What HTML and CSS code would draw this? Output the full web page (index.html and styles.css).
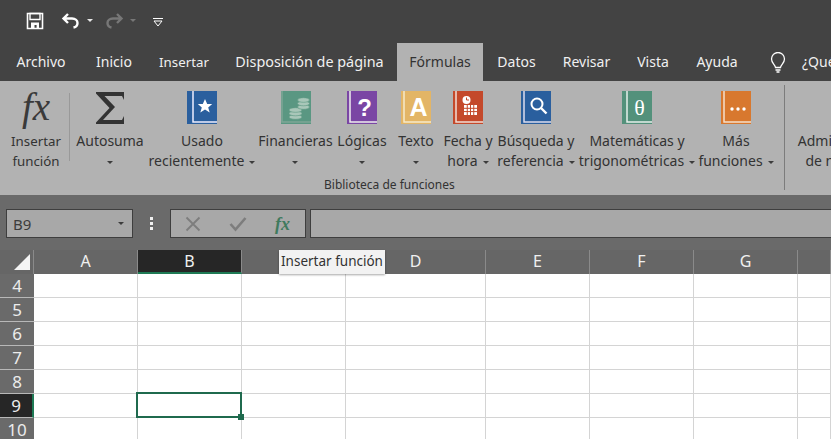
FILE: index.html
```html
<!DOCTYPE html>
<html lang="es">
<head>
<meta charset="utf-8">
<title>Fórmulas</title>
<link rel="stylesheet" href="styles.css">
</head>
<body>
<div class="app">
  <header class="qat">
    <svg class="qat-save" width="18" height="18" viewBox="0 0 18 18"><path d="M1.500 1.500h15v15h-15z" fill="none" stroke="#fff" stroke-width="1.600"/><path d="M4 1.500h10v6H4z" fill="none" stroke="#fff" stroke-width="1.400"/><path d="M5 16v-5.500h8V16h-2.400v-3H8.500v3z" fill="#fff"/></svg>
    <svg class="qat-undo" width="20" height="18" viewBox="0 0 20 18"><path d="M7 2 2.500 6.500 7 11M3 6.500h8c3.500 0 5.500 2 5.500 4.500s-1.500 4-4 4.500" fill="none" stroke="#fff" stroke-width="2.400"/></svg>
    <span class="caret caret-light"></span>
    <svg class="qat-redo" width="20" height="18" viewBox="0 0 20 18"><path d="M13 2l4.500 4.500L13 11M17 6.500H9c-3.500 0-5.500 2-5.500 4.500s1.500 4 4 4.500" fill="none" stroke="#777" stroke-width="2.400"/></svg>
    <span class="caret caret-dim"></span>
    <svg class="qat-more" width="10" height="9" viewBox="0 0 10 9"><path d="M0 .5h10" stroke="#fff"/><path d="M1 3h8L5 8z" fill="none" stroke="#fff"/></svg>
  </header>

  <nav class="tabs">
    <span class="tab t-archivo">Archivo</span>
    <span class="tab t-inicio">Inicio</span>
    <span class="tab t-insertar">Insertar</span>
    <span class="tab t-disp">Disposición de página</span>
    <span class="tab t-form tab-active">Fórmulas</span>
    <span class="tab t-datos">Datos</span>
    <span class="tab t-rev">Revisar</span>
    <span class="tab t-vista">Vista</span>
    <span class="tab t-ayuda">Ayuda</span>
    <svg class="bulb" width="16" height="21" viewBox="0 0 16 21"><path d="M5.500 15.500C5 12.500 1.500 11 1.500 7a6.500 6.500 0 0 1 13 0c0 4-3.500 5.500-4 8.500z" fill="none" stroke="#fff" stroke-width="1.300"/><path d="M5.500 18h5M6.500 20h3" stroke="#fff" stroke-width="1.300"/></svg>
    <span class="search">¿Qué desea hacer?</span>
  </nav>

  <section class="ribbon">
    <div class="rb w-insert">
      <span class="fx-big">fx</span>
      <span class="rb-label rb-narrow">Insertar<br>función</span>
    </div>
    <div class="rb-sep-small"></div>
    <div class="rb w-auto">
      <svg class="rb-icon" width="30" height="34" viewBox="0 0 30 34"><path d="M1 1h28v8l-2-4H9.500L20 16 8 29h19l2-4v8H1v-1.500L14.500 17 1 2.500z" fill="#333"/></svg>
      <span class="rb-label">Autosuma<br><span class="caret caret-dark"></span></span>
    </div>
    <div class="rb w-used">
      <svg class="rb-icon" width="30" height="34" viewBox="0 0 30 34"><rect width="30" height="33" fill="#2a5f9e"/><path d="M6 0v31h24" fill="none" stroke="#eef" stroke-width="1.500"/><path d="M18 8l2.200 5h5l-4 3.400 1.500 5.200-4.700-3-4.700 3 1.500-5.200-4-3.400h5z" fill="#fff"/></svg>
      <span class="rb-label">Usado<br>recientemente<span class="caret caret-dark inline"></span></span>
    </div>
    <div class="rb w-fin">
      <svg class="rb-icon" width="30" height="34" viewBox="0 0 30 34"><rect width="30" height="33" fill="#5a9782"/><path d="M1 0v31h29" fill="none" stroke="#7fa796" stroke-width="1.500"/><g fill="#a9c7b9" stroke="#5a9782" stroke-width=".6"><ellipse cx="14.500" cy="26" rx="6.500" ry="2.300"/><ellipse cx="14.500" cy="22.500" rx="6.500" ry="2.300"/><ellipse cx="14.500" cy="19" rx="6.500" ry="2.300"/><ellipse cx="22.500" cy="16" rx="6" ry="2.300"/><ellipse cx="22.500" cy="12.500" rx="6" ry="2.300"/><ellipse cx="22.500" cy="9" rx="6" ry="2.300"/></g></svg>
      <span class="rb-label">Financieras<br><span class="caret caret-dark"></span></span>
    </div>
    <div class="rb w-log">
      <svg class="rb-icon" width="30" height="34" viewBox="0 0 30 34"><rect width="30" height="33" fill="#7a46a4"/><path d="M3 0v31h27" fill="none" stroke="#eee" stroke-width="1.500"/><text class="glyph glyph-q" x="17.500" y="25">?</text></svg>
      <span class="rb-label">Lógicas<br><span class="caret caret-dark"></span></span>
    </div>
    <div class="rb w-txt">
      <svg class="rb-icon" width="30" height="34" viewBox="0 0 30 34"><rect width="30" height="33" fill="#e3b566"/><path d="M3 0v31h27" fill="none" stroke="#f6eacb" stroke-width="1.500"/><text class="glyph glyph-a" x="17.500" y="25">A</text></svg>
      <span class="rb-label">Texto<br><span class="caret caret-dark"></span></span>
    </div>
    <div class="rb w-date">
      <svg class="rb-icon" width="30" height="34" viewBox="0 0 30 34"><rect width="30" height="33" fill="#c4492b"/><path d="M3 0v31h27" fill="none" stroke="#f2ddd5" stroke-width="1.500"/><circle cx="13.500" cy="9" r="4" fill="#fff"/><path d="M13.500 6.500V9h2.500" stroke="#c4492b" fill="none"/><path d="M11 14h13v10H11z" fill="#fff"/><path d="M14.250 14v10M17.500 14v10M20.750 14v10M11 17.300h13M11 20.600h13" stroke="#c4492b"/></svg>
      <span class="rb-label">Fecha y<br>hora<span class="caret caret-dark inline"></span></span>
    </div>
    <div class="rb w-find">
      <svg class="rb-icon" width="30" height="34" viewBox="0 0 30 34"><rect width="30" height="33" fill="#2a5f9e"/><path d="M3 0v31h27" fill="none" stroke="#dde" stroke-width="1.500"/><circle cx="16" cy="13" r="5.500" fill="none" stroke="#fff" stroke-width="2"/><path d="M20 17l5.500 5.500" stroke="#fff" stroke-width="2.400"/></svg>
      <span class="rb-label">Búsqueda y<br>referencia<span class="caret caret-dark inline"></span></span>
    </div>
    <div class="rb w-math">
      <svg class="rb-icon" width="30" height="34" viewBox="0 0 30 34"><rect width="30" height="33" fill="#53917b"/><path d="M5 0v31h25" fill="none" stroke="#e6f0ec" stroke-width="1.500"/><text class="glyph glyph-t" x="17.500" y="24">θ</text></svg>
      <span class="rb-label">Matemáticas y<br>trigonométricas<span class="caret caret-dark inline"></span></span>
    </div>
    <div class="rb w-more">
      <svg class="rb-icon" width="30" height="34" viewBox="0 0 30 34"><rect width="30" height="33" fill="#d8782e"/><path d="M3 0v31h27" fill="none" stroke="#f5e0cc" stroke-width="1.500"/><g fill="#fff"><circle cx="11" cy="18" r="1.700"/><circle cx="17" cy="18" r="1.700"/><circle cx="23" cy="18" r="1.700"/></g></svg>
      <span class="rb-label">Más<br>funciones<span class="caret caret-dark inline"></span></span>
    </div>
    <div class="rb-sep"></div>
    <div class="rb w-admin">
      <span class="admin-icon"></span>
      <span class="rb-label">Administrador<br>de nombres</span>
    </div>
    <div class="group-label">Biblioteca de funciones</div>
  </section>

  <section class="fbar">
    <div class="namebox"><span>B9</span><span class="caret caret-dark"></span></div>
    <div class="kebab"><i></i><i></i><i></i></div>
    <div class="fbtns">
      <svg width="16" height="16" viewBox="0 0 16 16"><path d="M1.500 1.500l13 13M14.500 1.500l-13 13" stroke="#7d7d7d" stroke-width="1.800"/></svg>
      <svg width="18" height="16" viewBox="0 0 18 16"><path d="M1.500 8l5 5.500L16.500 2" fill="none" stroke="#7d7d7d" stroke-width="2.600"/></svg>
      <span class="fx-small">fx</span>
    </div>
    <div class="finput"></div>
  </section>

  <section class="sheet">
    <div class="corner"><span class="tri"></span></div>
    <div class="ch">A</div><div class="ch ch-sel">B</div><div class="ch"></div><div class="ch">D</div><div class="ch">E</div><div class="ch">F</div><div class="ch">G</div><div class="ch"></div>

    <div class="rh">4</div><div class="c"></div><div class="c"></div><div class="c"></div><div class="c"></div><div class="c"></div><div class="c"></div><div class="c"></div><div class="c"></div>
    <div class="rh">5</div><div class="c"></div><div class="c"></div><div class="c"></div><div class="c"></div><div class="c"></div><div class="c"></div><div class="c"></div><div class="c"></div>
    <div class="rh">6</div><div class="c"></div><div class="c"></div><div class="c"></div><div class="c"></div><div class="c"></div><div class="c"></div><div class="c"></div><div class="c"></div>
    <div class="rh">7</div><div class="c"></div><div class="c"></div><div class="c"></div><div class="c"></div><div class="c"></div><div class="c"></div><div class="c"></div><div class="c"></div>
    <div class="rh">8</div><div class="c"></div><div class="c"></div><div class="c"></div><div class="c"></div><div class="c"></div><div class="c"></div><div class="c"></div><div class="c"></div>
    <div class="rh rh-sel">9</div><div class="c"></div><div class="c c-active"><span class="selbox"></span><span class="handle"></span></div><div class="c"></div><div class="c"></div><div class="c"></div><div class="c"></div><div class="c"></div><div class="c"></div>
    <div class="rh">10</div><div class="c"></div><div class="c"></div><div class="c"></div><div class="c"></div><div class="c"></div><div class="c"></div><div class="c"></div><div class="c"></div>

    <div class="tooltip">Insertar función</div>
  </section>
</div>
</body>
</html>
```
FILE: styles.css
```css
* { box-sizing: border-box; }
html, body { margin: 0; padding: 0; }
body { width: 831px; height: 439px; overflow: hidden; background: #fff; font-family: "Noto Sans", "Open Sans", sans-serif; }
.app { width: 831px; height: 439px; overflow: hidden; display: flex; flex-direction: column; }

.qat { height: 43px; background: #434343; display: flex; align-items: center; padding: 0 0 2px 26px; flex: none; }
.qat-save { margin-right: 17px; }
.qat-undo { margin-right: 6px; }
.qat-redo { margin-left: 11px; margin-right: 6px; }
.qat-more { margin-left: 17px; margin-top: 4px; }
.caret { display: inline-block; width: 0; height: 0; border-left: 3.500px solid transparent; border-right: 3.500px solid transparent; border-top: 3.500px solid #fff; }
.caret-light { border-top-color: #e8e8e8; }
.caret-dim { border-top-color: #777; }
.caret-dark { border-top-color: #3c3c3c; vertical-align: middle; }
.caret.inline { margin-left: 5px; }

.tabs { height: 38px; background: #434343; display: flex; align-items: stretch; flex: none; white-space: nowrap; overflow: hidden; }
.tab { color: #f0f0f0; font-size: 14px; line-height: 38px; text-align: center; flex: none; }
.t-archivo { width: 82px; }
.t-inicio { width: 64px; }
.t-insertar { width: 76px; font-size: 13.300px; }
.t-disp { width: 175px; font-size: 14.400px; }
.t-form { width: 86px; }
.t-datos { width: 67px; }
.t-rev { width: 73px; }
.t-vista { width: 60px; }
.t-ayuda { width: 68px; }
.tab-active { background: #b2b2b2; color: #333; }
.bulb { margin: 9px 16px 0 19px; flex: none; }
.search { color: #f0f0f0; font-size: 14px; line-height: 38px; }

.ribbon { height: 114px; background: #b2b2b2; display: flex; padding-left: 3px; flex: none; position: relative; overflow: hidden; }
.rb { flex: none; display: flex; flex-direction: column; align-items: center; padding-top: 10px; height: 100%; }
.rb-icon { display: block; height: 34px; flex: none; }
.rb-label { margin-top: 6px; text-align: center; color: #333; font-size: 14px; line-height: 20px; white-space: nowrap; }
.rb-narrow { font-size: 13.300px; }
.w-insert { width: 66px; }
.w-auto { width: 74px; }
.w-used { width: 110px; }
.w-fin { width: 77px; }
.w-log { width: 56px; }
.w-txt { width: 52px; }
.w-date { width: 52px; }
.w-find { width: 84px; }
.w-math { width: 118px; }
.w-more { width: 80px; }
.w-admin { width: 100px; margin-left: -2px; }
.rb-sep-small { width: 1px; height: 68px; background: #999; margin: 12px 3px 0 0; flex: none; }
.rb-sep { width: 1px; height: 105px; background: #7c7c7c; margin: 4px 12px 0 8px; flex: none; }
.fx-big { display: block; height: 34px; font-family: "Liberation Serif", serif; font-style: italic; font-size: 39px; line-height: 32px; color: #3a3a3a; }
.admin-icon { display: block; width: 12px; height: 13px; border: 1px solid #333; margin: 16px 0 5px 64px; flex: none; }
.group-label { position: absolute; left: 324px; top: 96px; font-size: 12px; line-height: 16px; color: #333; }
.glyph { text-anchor: middle; fill: #fff; font-family: "Liberation Sans", sans-serif; font-weight: bold; }
.glyph-q { font-size: 24px; }
.glyph-a { font-size: 25px; }
.glyph-t { font-size: 22px; font-family: "Liberation Serif", serif; font-weight: normal; }

.fbar { height: 55px; background: #6a6a6a; display: flex; align-items: flex-start; padding: 14px 0 0 6px; flex: none; }
.namebox { width: 127px; height: 29px; background: #a8a8a8; border: 1px solid #3e3e3e; display: flex; align-items: center; justify-content: space-between; padding: 0 8px 0 6px; color: #3c3c3c; font-size: 15px; }
.kebab { width: 37px; height: 29px; display: flex; flex-direction: column; align-items: center; justify-content: center; gap: 2px; }
.kebab i { width: 3px; height: 3px; background: #f0f0f0; display: block; }
.fbtns { width: 136px; height: 29px; background: #a8a8a8; border: 1px solid #3e3e3e; display: flex; align-items: center; gap: 28px; padding-left: 14px; }
.fx-small { font-family: "Liberation Serif", serif; font-style: italic; font-weight: bold; font-size: 18px; line-height: 20px; color: #3f7a5e; }
.finput { flex: 1; height: 29px; margin-left: 4px; background: #a8a8a8; border: 1px solid #3e3e3e; border-right: 0; }

.sheet { position: relative; display: grid; grid-template-columns: 34px 104px 104px 104px 140px 104px 104px 104px 33px; grid-template-rows: 24px repeat(7, 24px); flex: none; }
.corner { background: #666; border-right: 1px solid #8a8a8a; position: relative; }
.tri { position: absolute; right: 3px; bottom: 4px; width: 0; height: 0; border-left: 16px solid transparent; border-bottom: 16px solid #f4f4f4; }
.ch { background: #666; color: #f0f0f0; border-right: 1px solid #8a8a8a; font-size: 16px; line-height: 23px; text-align: center; }
.ch-sel { background: #262626; border-bottom: 2px solid #1f7a55; }
.rh { background: #6a6a6a; color: #ececec; border-bottom: 1px solid #b8b8b8; font-size: 17px; line-height: 24px; text-align: center; }
.rh-sel { background: #262626; border-right: 2px solid #1f7a55; }
.c { background: #fff; border-right: 1px solid #d4d4d4; border-bottom: 1px solid #d4d4d4; position: relative; }
.c-active { z-index: 1; }
.selbox { position: absolute; left: -2px; top: -2px; right: -1px; bottom: -1px; border: 2px solid #1f6a4e; }
.handle { position: absolute; right: -3px; bottom: -3px; width: 6px; height: 6px; background: #1f6a4e; }
.tooltip { position: absolute; left: 279px; top: 0; width: 106px; height: 24px; background: #f2f2f2; color: #333; font-size: 13.500px; line-height: 23px; text-align: center; white-space: nowrap; box-shadow: 0 1px 2px rgba(0,0,0,.35); z-index: 2; }
```
